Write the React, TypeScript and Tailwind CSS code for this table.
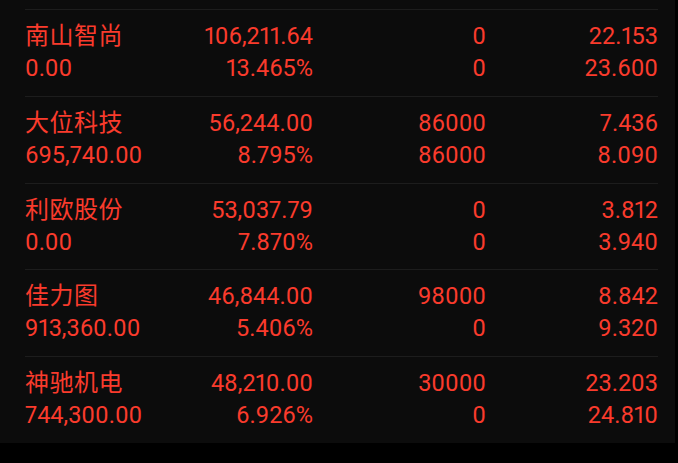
import React from "react";

type Row = { name: string; a: string; b: string; c: string; d: string; e: string; f: string; g: string };

const rows: Row[] = [
  { name: "南山智尚", a: "106,211.64", b: "0", c: "22.153", d: "0.00", e: "13.465%", f: "0", g: "23.600" },
  { name: "大位科技", a: "56,244.00", b: "86000", c: "7.436", d: "695,740.00", e: "8.795%", f: "86000", g: "8.090" },
  { name: "利欧股份", a: "53,037.79", b: "0", c: "3.812", d: "0.00", e: "7.870%", f: "0", g: "3.940" },
  { name: "佳力图", a: "46,844.00", b: "98000", c: "8.842", d: "913,360.00", e: "5.406%", f: "0", g: "9.320" },
  { name: "神驰机电", a: "48,210.00", b: "30000", c: "23.203", d: "744,300.00", e: "6.926%", f: "0", g: "24.810" },
];

export default function App() {
  return (
    <div className="w-[678px] h-[463px] bg-black overflow-hidden">
      <div
        className="w-[675px] h-[443px] bg-[#0c0c0c] pl-[25px] pr-[17px] pt-[9px] text-[#fa3b2c] text-[23.5px] proportional-nums"
        style={{ fontFamily: "Roboto, 'Noto Sans CJK SC', sans-serif" }}
      >
        {rows.map((r, i) => (
          <div key={i} className="h-[86.8px] border-t border-[#1d1d1d] pt-[10px]">
            <div className="grid grid-cols-[140px_148px_173px_172px] h-[32px] leading-[32px]">
              <div className="text-[24px] tracking-[0.5px]">{r.name}</div>
              <div className="text-right">{r.a}</div>
              <div className="text-right">{r.b}</div>
              <div className="text-right">{r.c}</div>
            </div>
            <div className="grid grid-cols-[140px_148px_173px_172px] h-[32px] leading-[32px]">
              <div className="whitespace-nowrap">{r.d}</div>
              <div className="text-right">{r.e}</div>
              <div className="text-right">{r.f}</div>
              <div className="text-right">{r.g}</div>
            </div>
          </div>
        ))}
      </div>
    </div>
  );
}
